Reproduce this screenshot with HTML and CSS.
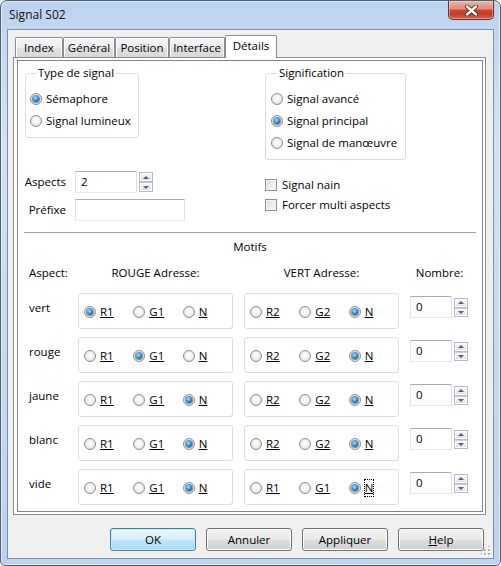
FILE: index.html
```html
<!DOCTYPE html>
<html lang="fr">
<head>
<meta charset="utf-8">
<title>Signal S02</title>
<link rel="stylesheet" href="styles.css">
</head>
<body>
<div class="window">
  <div class="titlebar">
    <span class="title">Signal S02</span>
    <div class="close">
      <svg width="13" height="11" viewBox="0 0 13 11">
        <path d="M2 1.5 L11 9.5 M11 1.5 L2 9.5" stroke="#4a2019" stroke-width="4.2" stroke-linecap="round" fill="none"/>
        <path d="M2 1.5 L11 9.5 M11 1.5 L2 9.5" stroke="#ffffff" stroke-width="2.4" stroke-linecap="round" fill="none"/>
      </svg>
    </div>
  </div>
  <div class="client">
    <div class="tabs">
      <div class="tab t-index">Index</div>
      <div class="tab t-general">Général</div>
      <div class="tab t-position">Position</div>
      <div class="tab t-interface">Interface</div>
      <div class="tab sel t-details">Détails</div>
    </div>
    <div class="page">
      <div class="panel">
        <div class="top">
          <div class="col-left">
            <fieldset class="group g-type">
              <legend>Type de signal</legend>
              <div class="opt"><span class="radio on"></span>Sémaphore</div>
              <div class="opt"><span class="radio"></span>Signal lumineux</div>
            </fieldset>
            <div class="field f-aspects">
              <span class="flabel">Aspects</span>
              <div class="edit e-aspects">2</div>
              <div class="spin"><span class="sb up"></span><span class="sb down"></span></div>
            </div>
            <div class="field f-prefix">
              <span class="flabel">Préfixe</span>
              <div class="edit e-prefix"></div>
            </div>
          </div>
          <div class="col-right">
            <fieldset class="group g-sig">
              <legend>Signification</legend>
              <div class="opt"><span class="radio"></span>Signal avancé</div>
              <div class="opt"><span class="radio on"></span>Signal principal</div>
              <div class="opt"><span class="radio"></span>Signal de manœuvre</div>
            </fieldset>
            <div class="checks">
              <div class="chk"><span class="box"></span>Signal nain</div>
              <div class="chk"><span class="box"></span>Forcer multi aspects</div>
            </div>
          </div>
        </div>
        <div class="sep"></div>
        <div class="motifs-title">Motifs</div>
        <div class="grid">
          <div class="h h-aspect">Aspect:</div>
          <div class="h">ROUGE Adresse:</div>
          <div class="h">VERT Adresse:</div>
          <div class="h">Nombre:</div>

          <div class="rlabel">vert</div>
          <div class="rbox"><div class="ropt"><span class="radio on"></span><u>R1</u></div><div class="ropt"><span class="radio"></span><u>G1</u></div><div class="ropt"><span class="radio"></span><u>N</u></div></div>
          <div class="rbox"><div class="ropt"><span class="radio"></span><u>R2</u></div><div class="ropt"><span class="radio"></span><u>G2</u></div><div class="ropt"><span class="radio on"></span><u>N</u></div></div>
          <div class="ncell"><div class="edit e-num">0</div><div class="spin small"><span class="sb up"></span><span class="sb down"></span></div></div>

          <div class="rlabel">rouge</div>
          <div class="rbox"><div class="ropt"><span class="radio"></span><u>R1</u></div><div class="ropt"><span class="radio on"></span><u>G1</u></div><div class="ropt"><span class="radio"></span><u>N</u></div></div>
          <div class="rbox"><div class="ropt"><span class="radio"></span><u>R2</u></div><div class="ropt"><span class="radio"></span><u>G2</u></div><div class="ropt"><span class="radio on"></span><u>N</u></div></div>
          <div class="ncell"><div class="edit e-num">0</div><div class="spin small"><span class="sb up"></span><span class="sb down"></span></div></div>

          <div class="rlabel">jaune</div>
          <div class="rbox"><div class="ropt"><span class="radio"></span><u>R1</u></div><div class="ropt"><span class="radio"></span><u>G1</u></div><div class="ropt"><span class="radio on"></span><u>N</u></div></div>
          <div class="rbox"><div class="ropt"><span class="radio"></span><u>R2</u></div><div class="ropt"><span class="radio"></span><u>G2</u></div><div class="ropt"><span class="radio on"></span><u>N</u></div></div>
          <div class="ncell"><div class="edit e-num">0</div><div class="spin small"><span class="sb up"></span><span class="sb down"></span></div></div>

          <div class="rlabel">blanc</div>
          <div class="rbox"><div class="ropt"><span class="radio"></span><u>R1</u></div><div class="ropt"><span class="radio"></span><u>G1</u></div><div class="ropt"><span class="radio on"></span><u>N</u></div></div>
          <div class="rbox"><div class="ropt"><span class="radio"></span><u>R2</u></div><div class="ropt"><span class="radio"></span><u>G2</u></div><div class="ropt"><span class="radio on"></span><u>N</u></div></div>
          <div class="ncell"><div class="edit e-num">0</div><div class="spin small"><span class="sb up"></span><span class="sb down"></span></div></div>

          <div class="rlabel">vide</div>
          <div class="rbox"><div class="ropt"><span class="radio"></span><u>R1</u></div><div class="ropt"><span class="radio"></span><u>G1</u></div><div class="ropt"><span class="radio on"></span><u>N</u></div></div>
          <div class="rbox"><div class="ropt"><span class="radio"></span><u>R1</u></div><div class="ropt"><span class="radio"></span><u>G1</u></div><div class="ropt"><span class="radio on"></span><u class="focus">N</u></div></div>
          <div class="ncell"><div class="edit e-num">0</div><div class="spin small"><span class="sb up"></span><span class="sb down"></span></div></div>
        </div>
      </div>
    </div>
    <div class="buttons">
      <div class="btn default">OK</div>
      <div class="btn">Annuler</div>
      <div class="btn">Appliquer</div>
      <div class="btn"><u>H</u>elp</div>
    </div>
    <svg class="grip" width="10" height="10" viewBox="0 0 10 10">
      <rect x="8" y="0" width="2" height="2" fill="#ffffff"/>
      <rect x="7" y="-1" width="2" height="2" fill="#b4b4b4"/>
      <rect x="8" y="4" width="2" height="2" fill="#ffffff"/>
      <rect x="7" y="3" width="2" height="2" fill="#b4b4b4"/>
      <rect x="4" y="4" width="2" height="2" fill="#ffffff"/>
      <rect x="3" y="3" width="2" height="2" fill="#b4b4b4"/>
      <rect x="8" y="8" width="2" height="2" fill="#ffffff"/>
      <rect x="7" y="7" width="2" height="2" fill="#b4b4b4"/>
      <rect x="4" y="8" width="2" height="2" fill="#ffffff"/>
      <rect x="3" y="7" width="2" height="2" fill="#b4b4b4"/>
      <rect x="0" y="8" width="2" height="2" fill="#ffffff"/>
      <rect x="-1" y="7" width="2" height="2" fill="#b4b4b4"/>
    </svg>
  </div>
</div>
</body>
</html>
```

FILE: styles.css
```css
* { box-sizing: border-box; }
html, body { margin: 0; padding: 0; }
body {
  width: 501px;
  height: 566px;
  overflow: hidden;
  background: #ffffff;
  font-family: "Segoe UI", "Open Sans", sans-serif;
  font-size: 11.5px;
  line-height: 16px;
  color: #000;
}

/* window frame */
.window {
  width: 501px;
  height: 566px;
  border: 1px solid #4f6075;
  border-radius: 7px 7px 5px 5px;
  background: linear-gradient(180deg, #bcd3ef 0%, #d3e3f6 25%, #c8dbf1 55%, #bcd2ee 100%);
  box-shadow: inset 0 0 0 1px rgba(255, 255, 255, 0.55);
  padding: 0 6px 6px 6px;
  display: flex;
  flex-direction: column;
}
.titlebar {
  height: 28px;
  flex: none;
  display: flex;
  justify-content: space-between;
  align-items: flex-start;
}
.title {
  padding: 6px 0 0 2px;
  font-size: 12px;
  color: #101010;
}
.close {
  width: 46px;
  height: 19px;
  border: 1px solid #6a3027;
  border-top: none;
  border-radius: 0 0 5px 5px;
  background: linear-gradient(180deg, #ebb3a6 0%, #e0917f 42%, #c9462f 52%, #c13c25 72%, #d8684d 100%);
  box-shadow: inset 0 0 0 1px rgba(255, 255, 255, 0.35);
  display: flex;
  align-items: center;
  justify-content: center;
}
.close svg { display: block; }

.client {
  position: relative;
  height: 530px;
  flex: none;
  border: 1px solid #7d90a8;
  background: #f0f0f0;
  padding-top: 5px;
}

/* tabs */
.tabs {
  height: 22px;
  margin-left: 7px;
  display: flex;
  align-items: flex-end;
}
.tab {
  height: 20px;
  border: 1px solid #898c95;
  border-bottom: none;
  border-radius: 2px 2px 0 0;
  background: linear-gradient(180deg, #f6f6f6 0%, #ececec 50%, #e1e1e1 51%, #d8d8d8 100%);
  box-shadow: inset 1px 1px 0 #ffffff, inset -1px 0 0 #fbfbfb;
  display: flex;
  align-items: center;
  justify-content: center;
  white-space: nowrap;
  padding-top: 1px;
}
.t-index { width: 48px; }
.t-general { width: 52px; }
.t-position { width: 54px; }
.t-interface { width: 56px; }
.tab.sel {
  position: relative;
  z-index: 1;
  width: 52px;
  height: 23px;
  margin-bottom: -1px;
  background: #ffffff;
  box-shadow: none;
  padding-top: 0;
  padding-bottom: 2px;
}

.page {
  margin-left: 5px;
  width: 473px;
  height: 458px;
  border: 1px solid #898c95;
  background: #ffffff;
  padding: 2px 2px 2px 3px;
}
.panel {
  width: 466px;
  height: 452px;
  border: 1px solid #80838a;
  background: #ffffff;
  padding: 4px 6px 0 6px;
}

/* top section */
.top { display: flex; }
.col-left { width: 241px; flex: none; }
.col-right { flex: 1; }

.group {
  margin: 0;
  border: 1px solid #d5dfe5;
  border-radius: 3px;
  padding: 7px 0 5px 4px;
  min-width: 0;
}
.group legend {
  padding: 0 2px;
  margin-left: 6px;
  line-height: 16px;
}
.g-type { margin-left: 1px; width: 114px; }
.g-sig { width: 141px; padding-left: 5px; }
.opt {
  height: 22px;
  display: flex;
  align-items: center;
  white-space: nowrap;
}

.radio {
  flex: none;
  width: 12px;
  height: 12px;
  margin-right: 4px;
  border-radius: 50%;
  border: 1px solid #8b8d90;
  background: radial-gradient(circle at 50% 45%, #ffffff 0%, #f4f4f4 40%, #d2d2d2 100%);
  display: inline-grid;
  place-items: center;
}
.radio.on::after {
  content: "";
  width: 6px;
  height: 6px;
  border-radius: 50%;
  background: radial-gradient(circle at 40% 35%, #b2ebff 0%, #3aa9ec 35%, #135ca3 72%, #0b3a70 100%);
  box-shadow: 0 0 0 1px rgba(25, 55, 95, 0.55);
}

.field {
  height: 22px;
  display: flex;
  align-items: center;
}
.f-aspects { margin-top: 33px; }
.f-prefix { margin-top: 6px; }
.flabel {
  width: 42px;
  margin-right: 9px;
  text-align: right;
  white-space: nowrap;
}
.edit {
  height: 22px;
  border: 1px solid;
  border-color: #abadb3 #dbdfe6 #e3e9ef #e2e3ea;
  background: #ffffff;
  padding: 2px 5px 0 5px;
  line-height: 16px;
}
.e-aspects { width: 62px; }
.e-prefix { width: 110px; }

.spin {
  width: 14px;
  height: 20px;
  margin-left: 2px;
  display: flex;
  flex-direction: column;
}
.sb {
  flex: 1;
  border: 1px solid #b5b9c2;
  background: linear-gradient(180deg, #fafafa 0%, #ececec 50%, #dedede 100%);
  box-shadow: inset 0 0 0 1px #ffffff;
  display: flex;
  align-items: center;
  justify-content: center;
}
.sb.down { border-top-color: #c8ccd2; }
.sb.up::after {
  content: "";
  border-left: 3px solid transparent;
  border-right: 3px solid transparent;
  border-bottom: 3px solid #4e6185;
}
.sb.down::after {
  content: "";
  border-left: 3px solid transparent;
  border-right: 3px solid transparent;
  border-top: 3px solid #4e6185;
}

.checks { margin-top: 15px; }
.chk {
  height: 20px;
  display: flex;
  align-items: center;
  white-space: nowrap;
}
.box {
  flex: none;
  width: 12px;
  height: 12px;
  margin-right: 5px;
  border: 1px solid #8e8f8f;
  background: linear-gradient(135deg, #d6d6d6 0%, #eeeeee 55%, #fbfbfb 100%);
  box-shadow: inset 0 0 0 1px #f4f4f4;
}

/* motifs */
.sep {
  margin-top: 11px;
  height: 1px;
  background: #a0a0a0;
}
.motifs-title {
  margin-top: 6px;
  text-align: center;
  line-height: 16px;
}
.grid {
  margin-top: 10px;
  display: grid;
  grid-template-columns: 43px 155px 155px 59px;
  grid-template-rows: 20px repeat(5, 36px);
  column-gap: 11px;
  row-gap: 8px;
}
.h {
  text-align: center;
  white-space: nowrap;
}
.h-aspect { text-align: left; padding-left: 5px; }
.rlabel { padding: 7px 0 0 5px; white-space: nowrap; }
.rbox {
  border: 1px solid #d5dfe5;
  border-radius: 3px;
  padding: 2px 0 0 5px;
  display: flex;
  align-items: center;
}
.ropt {
  width: 50px;
  display: flex;
  align-items: center;
  white-space: nowrap;
}
.ropt u { text-decoration: underline; text-underline-offset: 1px; }
.ropt u.focus { outline: 1px dotted #000; outline-offset: 0; }
.ncell {
  display: flex;
  align-items: flex-start;
  padding-top: 3px;
}
.e-num { width: 42px; }
.spin.small { height: 19px; margin-top: 2px; }

/* buttons */
.buttons {
  margin-top: 13px;
  padding-right: 9px;
  display: flex;
  justify-content: flex-end;
  gap: 10px;
}
.btn {
  width: 86px;
  height: 23px;
  border: 1px solid #707070;
  border-radius: 3px;
  background: linear-gradient(180deg, #f2f2f2 0%, #ebebeb 48%, #dddddd 52%, #cfcfcf 100%);
  box-shadow: inset 0 0 0 1px #fcfcfc;
  display: flex;
  align-items: center;
  justify-content: center;
}
.btn.default {
  border-color: #3c7fb1;
  background: linear-gradient(180deg, #eaf6fd 0%, #d9f0fc 48%, #bee6fd 52%, #a7d9f5 100%);
  box-shadow: inset 0 0 0 1px #c7ecfc;
}
.grip {
  position: absolute;
  right: 2px;
  bottom: 2px;
}
```
